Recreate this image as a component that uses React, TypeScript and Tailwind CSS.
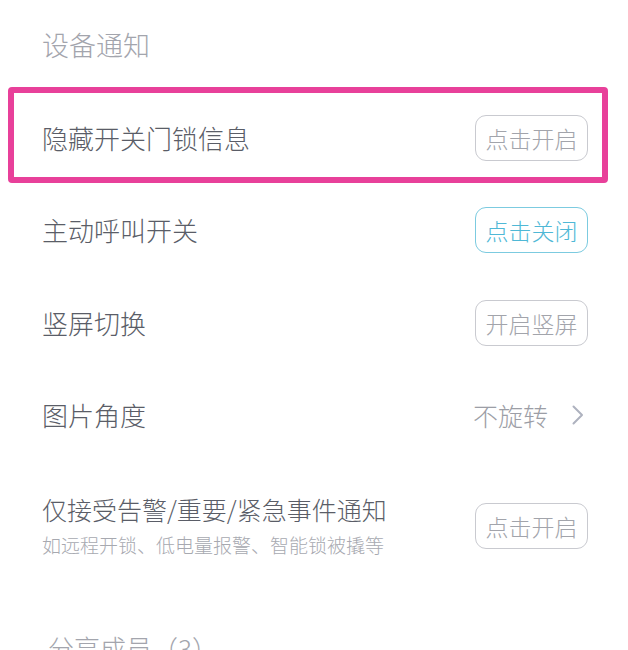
const font = { fontFamily: '"Noto Sans CJK SC", "Noto Sans", sans-serif' };

function PillButton({ label, active = false }: { label: string; active?: boolean }) {
  return (
    <div
      className={`flex h-[46px] w-[113px] items-center justify-center rounded-[11px] border-[1.5px] text-[23px] leading-none ${
        active ? "border-[#7ccbe0] text-[#4fb8d6]" : "border-[#c9cad0] text-[#a2a4ab]"
      }`}
    >
      {label}
    </div>
  );
}

function Chevron() {
  return (
    <svg width="12" height="20" viewBox="0 0 12 20" fill="none" className="shrink-0">
      <polyline points="1.5,1.5 10,10 1.5,18.5" stroke="#aeb2bf" strokeWidth="2" strokeLinecap="round" strokeLinejoin="round" />
    </svg>
  );
}

export default function App() {
  return (
    <div className="h-[650px] w-[628px] overflow-hidden bg-white font-light" style={font}>
      {/* Section header */}
      <div className="flex h-[87px] items-start pl-[42px] pt-[28px]">
        <span className="text-[27px] leading-[34px] text-[#a3a5ad]">设备通知</span>
      </div>

      {/* Highlighted row */}
      <div className="ml-[8px] mr-[20px] rounded-[4px] border-[6px] border-[#e8409a]">
        <div className="flex h-[84px] items-center justify-between pl-[28px] pr-[14px] pt-[6px]">
          <span className="text-[26px] leading-[32px] text-[#5a5d67]">隐藏开关门锁信息</span>
          <PillButton label="点击开启" />
        </div>
      </div>

      <div className="flex h-[94px] items-center justify-between pl-[42px] pr-[40px]">
        <span className="text-[26px] leading-[32px] text-[#5a5d67]">主动呼叫开关</span>
        <PillButton label="点击关闭" active />
      </div>

      <div className="flex h-[92px] items-center justify-between pl-[42px] pr-[40px]">
        <span className="text-[26px] leading-[32px] text-[#5a5d67]">竖屏切换</span>
        <PillButton label="开启竖屏" />
      </div>

      <div className="flex h-[92px] items-center justify-between pl-[42px] pr-[44px]">
        <span className="text-[26px] leading-[32px] text-[#5a5d67]">图片角度</span>
        <div className="flex items-center gap-[24px]">
          <span className="text-[25px] leading-[32px] text-[#9c9ea6]">不旋转</span>
          <Chevron />
        </div>
      </div>

      <div className="flex h-[130px] items-center justify-between pl-[42px] pr-[40px]">
        <div className="flex flex-col">
          <span className="text-[25px] leading-[32px] text-[#5a5d67]">仅接受告警/重要/紧急事件通知</span>
          <span className="mt-[6px] text-[19px] leading-[28px] text-[#a7a9b0]">如远程开锁、低电量报警、智能锁被撬等</span>
        </div>
        <PillButton label="点击开启" />
      </div>

      <div className="pl-[48px] pt-[40px]">
        <span className="text-[26px] leading-[34px] text-[#a3a5ad]">分享成员（3）</span>
      </div>
    </div>
  );
}
